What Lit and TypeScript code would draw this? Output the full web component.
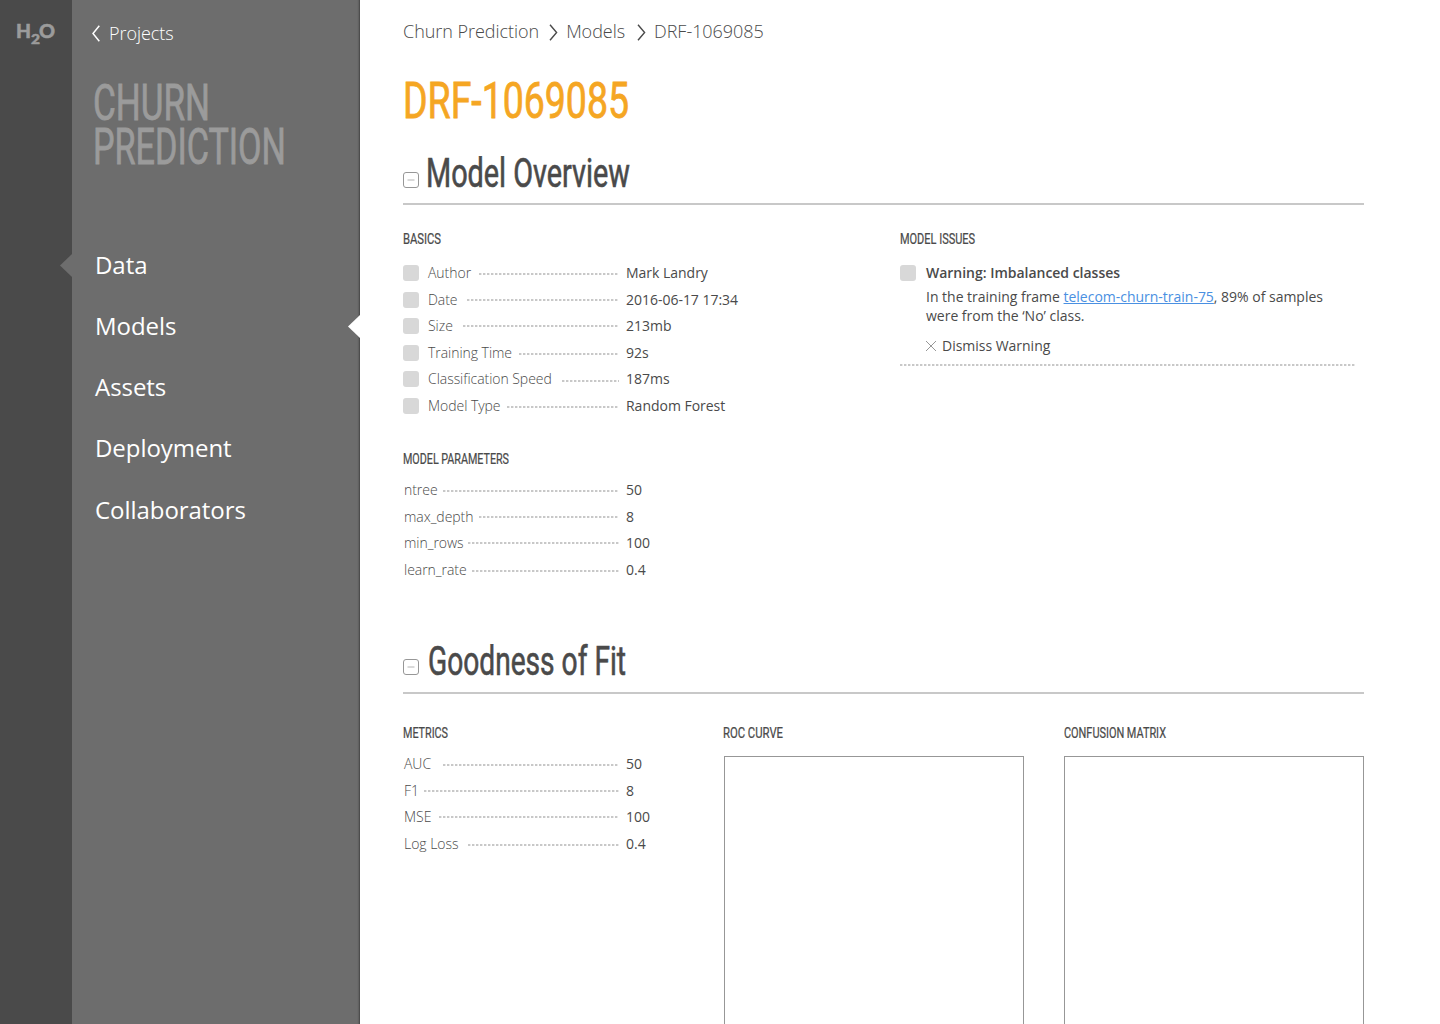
import { LitElement, html, css, svg } from "lit";
import { customElement, property } from "lit/decorators.js";

/* Narrow display text fitted to an exact width. */
@customElement("display-text")
class DisplayText extends LitElement {
  @property() text = "";
  @property({ type: Number }) w = 100;
  @property({ type: Number }) size = 14;
  static styles = css`
    :host { display: block; }
    svg { display: block; overflow: visible; }
    text { font-family: Roboto, "Open Sans", sans-serif; fill: currentColor; stroke: currentColor; stroke-width: .016em; }
  `;
  render() {
    const h = Math.round(this.size * 0.72);
    return html`<svg width=${this.w} height=${h}>
      ${svg`<text x="0" y=${h} font-size=${this.size} textLength=${this.w} lengthAdjust="spacingAndGlyphs">${this.text}</text>`}
    </svg>`;
  }
}

/* leader: length in pixels of the dotted line that ends before the value */
type Row = { label: string; value: string; leader: number };

const basics: Row[] = [
  { label: "Author", value: "Mark Landry", leader: 140 },
  { label: "Date", value: "2016-06-17 17:34", leader: 152 },
  { label: "Size", value: "213mb", leader: 156 },
  { label: "Training Time", value: "92s", leader: 100 },
  { label: "Classification Speed", value: "187ms", leader: 57 },
  { label: "Model Type", value: "Random Forest", leader: 112 },
];
const params: Row[] = [
  { label: "ntree", value: "50", leader: 176 },
  { label: "max_depth", value: "8", leader: 140 },
  { label: "min_rows", value: "100", leader: 151 },
  { label: "learn_rate", value: "0.4", leader: 147 },
];
const metrics: Row[] = [
  { label: "AUC", value: "50", leader: 176 },
  { label: "F1", value: "8", leader: 195 },
  { label: "MSE", value: "100", leader: 180 },
  { label: "Log Loss", value: "0.4", leader: 151 },
];

@customElement("app-root")
class AppRoot extends LitElement {
  static styles = css`
    :host {
      display: flex; width: 1440px; height: 1024px; overflow: hidden; background: #fff;
      font-family: "Open Sans", "Noto Sans", sans-serif; color: #4a4a4a; font-size: 14px;
      letter-spacing: -0.02px;
    }
    * { box-sizing: border-box; }
    .rail { width: 72px; background: #4a4a4a; padding: 20px 0 0 14px; position: relative; flex: none; }
    .rail svg { display: block; }
    .notch { position: absolute; right: 0; top: 254px; display: block; }
    .side { width: 288px; flex: none; background: #6d6d6d; padding: 21px 0 0 20px; position: relative; color: #fff;
      box-shadow: inset -3px 0 2px -2px rgba(0,0,0,.4); }
    .side .notch { top: 315px; }
    .back { display: flex; align-items: center; height: 24px; font-size: 18px; font-weight: 300; gap: 9px; letter-spacing: -0.06px; }
    .back svg { margin-top: 1px; }
    .project { color: #9b9b9b; margin: 39px 0 0 1px; display: flex; flex-direction: column; gap: 8px; }
    .nav { display: flex; flex-direction: column; margin: 70.1px 0 0 3px; }
    .nav a { height: 61.12px; line-height: 61px; font-size: 24px; color: #fff; letter-spacing: -0.05px; }
    .main { flex: none; width: 1080px; padding: 19px 76px 0 43px; }
    .crumbs { display: flex; align-items: center; height: 24px; font-size: 18px; font-weight: 300; letter-spacing: -0.04px; }
    .crumbs svg { margin: 3px 8px 0 10px; }
    .crumbs .last svg { margin-left: 12px; }
    .last { display: flex; align-items: center; }
    .title { color: #f5a623; margin-top: 39px; }
    .head { display: flex; align-items: flex-end; border-bottom: 2px solid #c8c8c8; width: 961px; }
    .h1 { height: 87px; padding-bottom: 15px; }
    .h1 display-text { margin: 0 0 1px 7px; }
    .h2 { height: 53px; padding-bottom: 17px; margin-top: 58px; }
    .h2 display-text { margin-left: 9px; }
    .cols { display: flex; padding-top: 28px; }
    .fit { padding-top: 33px; }
    .left { width: 497px; }
    .rows { display: flex; flex-direction: column; margin-top: 13px; }
    .boxed { margin: 16px 0 34px; }
    .row { display: flex; align-items: center; height: 26.5px; white-space: nowrap; }
    .key { display: flex; align-items: center; width: 223px; height: 100%; flex: none; }
    .box { width: 16px; height: 16px; background: #d8d8d8; border-radius: 3px; flex: none; margin-right: 9px; }
    .label { font-weight: 300; flex: 1; margin-bottom: 1.3px; line-height: 19px; letter-spacing: -0.04px; }
    .rows:not(.boxed) .label { padding-left: 1px; }
    .value { margin-bottom: 1.3px; line-height: 19px; }
    .dots, .rule { height: 2px; background: repeating-linear-gradient(90deg, #c8c8c8 0 2px, #e9e9e9 2px 3px, #fff 3px 4px); }
    .dots { margin: 1.4px 7px 0 0; flex: none; }
    .row:nth-child(3) .dots { margin-top: 0; }
    .row:nth-child(4) .dots { margin-top: 2px; }
    .row:nth-child(5) .dots { margin-top: 3.6px; }
    .row:nth-child(6) .dots { margin-top: 2.4px; }
    .metrics { width: 320px; }
    .roc { width: 341px; }
    .roc .plot { margin-left: 1px; }
    .issue { display: flex; margin-top: 19px; }
    .issue .box { margin: 2px 10px 0 0; }
    .issue-title { font-weight: 600; line-height: 20px; }
    .issue-text { line-height: 19px; margin-top: 4px; white-space: nowrap; letter-spacing: -0.015px; }
    .issue-text a { color: #4a90e2; text-decoration: underline; }
    .dismiss { display: flex; align-items: center; gap: 6px; height: 20px; margin-top: 10px; }
    .dismiss svg { margin-top: 2px; }
    .rule { width: 455px; margin: 9px 0 0; }
    .plot { width: 300px; height: 280px; border: 1px solid #979797; margin-top: 18px; }
  `;

  chevron() {
    return html`<svg width="9" height="17" viewBox="0 0 9 17" fill="none" stroke="#4a4a4a" stroke-width="1.4"><path d="M1 .7 7.6 8.5 1 16.3"/></svg>`;
  }
  toggle() {
    return html`<svg width="16" height="16" viewBox="0 0 16 16" fill="none"><rect x=".5" y=".5" width="15" height="15" rx="2.5" stroke="#979797"/><path d="M4.5 8h7" stroke="#b4b4b4" stroke-width="1"/></svg>`;
  }
  caption(text: string, w: number) {
    return html`<display-text text=${text} w=${w} size="15"></display-text>`;
  }
  rows(list: Row[], box = false) {
    return html`<div class="rows ${box ? "boxed" : ""}">${list.map((r) => html`<div class="row">
      <div class="key">
        ${box ? html`<span class="box"></span>` : ""}
        <span class="label">${r.label}</span>
        <span class="dots" style="width:${r.leader}px"></span>
      </div>
      <span class="value">${r.value}</span>
    </div>`)}</div>`;
  }
  render() {
    return html`
      <div class="rail">
        <svg width="44" height="30" viewBox="-2 -3 44 30" font-family="Lato, sans-serif" font-weight="900" fill="#9b9b9b" stroke="#9b9b9b" stroke-width=".5">
          <text x="0" y="15" font-size="19" textLength="15" lengthAdjust="spacingAndGlyphs">H</text>
          <text x="15" y="21.3" font-size="13.2" textLength="9" lengthAdjust="spacingAndGlyphs">2</text>
          <text x="23" y="14.8" font-size="19.5" textLength="16" lengthAdjust="spacingAndGlyphs">O</text>
        </svg>
        <svg class="notch" width="12" height="23" viewBox="0 0 12 23"><path d="M12 0v23L0 11.5z" fill="#6d6d6d"/></svg>
      </div>
      <div class="side">
        <div class="back"><svg width="8" height="17" viewBox="0 0 8 17" fill="none" stroke="#fff" stroke-width="1.5"><path d="M7.3.7 1 8.5l6.3 7.8"/></svg>Projects</div>
        <div class="project">
          <display-text text="CHURN" w="117" size="50"></display-text>
          <display-text text="PREDICTION" w="193" size="50"></display-text>
        </div>
        <nav class="nav"><a>Data</a><a>Models</a><a>Assets</a><a>Deployment</a><a>Collaborators</a></nav>
        <svg class="notch" width="12" height="23" viewBox="0 0 12 23"><path d="M12 0v23L0 11.5z" fill="#fff"/></svg>
      </div>
      <div class="main">
        <div class="crumbs">Churn Prediction${this.chevron()}Models<span class="last">${this.chevron()}DRF-1069085</span></div>
        <display-text class="title" text="DRF-1069085" w="226" size="50"></display-text>
        <div class="head h1">${this.toggle()}<display-text text="Model Overview" w="204" size="41"></display-text></div>
        <div class="cols">
          <div class="left">
            ${this.caption("BASICS", 38)}
            ${this.rows(basics, true)}
            ${this.caption("MODEL PARAMETERS", 106)}
            ${this.rows(params)}
          </div>
          <div>
            ${this.caption("MODEL ISSUES", 75)}
            <div class="issue"><span class="box"></span><div>
              <div class="issue-title">Warning: Imbalanced classes</div>
              <div class="issue-text">In the training frame <a>telecom-churn-train-75</a>, 89% of samples<br>were from the ‘No’ class.</div>
              <div class="dismiss"><svg width="10" height="10" viewBox="0 0 10 10" stroke="#979797"><path d="m0 0 10 10M10 0 0 10"/></svg>Dismiss Warning</div>
            </div></div>
            <div class="rule"></div>
          </div>
        </div>
        <div class="head h2">${this.toggle()}<display-text text="Goodness of Fit" w="198" size="41"></display-text></div>
        <div class="cols fit">
          <div class="metrics">${this.caption("METRICS", 45)}${this.rows(metrics)}</div>
          <div class="roc">${this.caption("ROC CURVE", 60)}<div class="plot"></div></div>
          <div>${this.caption("CONFUSION MATRIX", 102)}<div class="plot"></div></div>
        </div>
      </div>`;
  }
}
